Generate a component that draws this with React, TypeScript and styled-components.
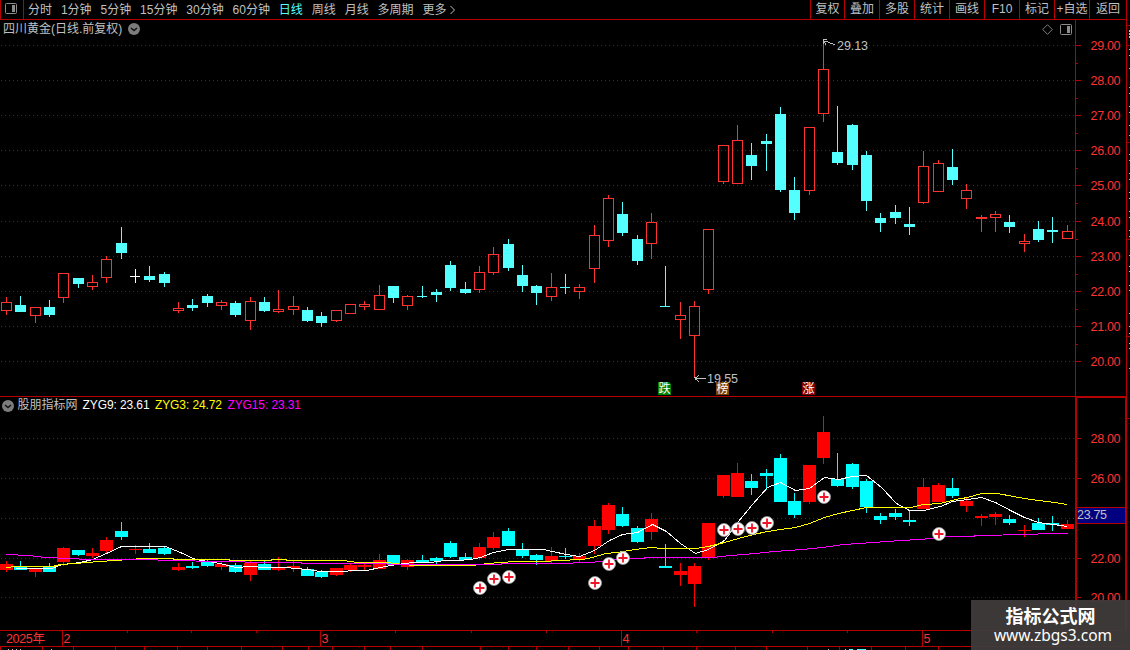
import React from 'react';
import { styled, createGlobalStyle } from 'styled-components';

type Kind = 'up' | 'down' | 'flat';
// [x, kind, price high/top/bottom/low, indicator high/top/bottom/low]
type Candle = [number, Kind, number, number, number, number, number, number, number, number];

const candles: Candle[] = [
  [6, 'up', 297, 302, 311, 315, 561, 564, 570, 572],
  [20, 'down', 296, 305, 312, 312, 561, 566, 570, 570],
  [35, 'up', 307, 307, 316, 323, 568, 568, 572, 577],
  [49, 'down', 300, 307, 315, 317, 563, 566, 572, 572],
  [63, 'up', 273, 273, 298, 303, 547, 548, 562, 566],
  [78, 'down', 278, 278, 284, 288, 550, 550, 555, 556],
  [92, 'up', 275, 282, 287, 290, 548, 553, 556, 558],
  [106, 'up', 256, 259, 278, 283, 537, 540, 551, 554],
  [121, 'down', 227, 243, 253, 259, 522, 531, 537, 540],
  [135, 'flat', 269, 276, 277, 283, 545, 549, 550, 554],
  [149, 'down', 266, 276, 280, 282, 543, 549, 553, 553],
  [164, 'down', 272, 274, 283, 287, 547, 548, 554, 555],
  [178, 'up', 302, 308, 311, 313, 563, 567, 570, 571],
  [192, 'down', 299, 305, 308, 311, 562, 566, 568, 569],
  [207, 'down', 294, 296, 303, 307, 560, 561, 566, 567],
  [221, 'up', 300, 302, 306, 310, 562, 564, 567, 570],
  [235, 'down', 301, 303, 315, 317, 563, 565, 572, 573],
  [250, 'up', 297, 301, 321, 330, 561, 563, 575, 581],
  [264, 'down', 297, 302, 311, 312, 561, 564, 570, 570],
  [278, 'up', 290, 309, 312, 313, 557, 568, 570, 571],
  [293, 'up', 296, 306, 310, 315, 561, 566, 568, 572],
  [307, 'down', 307, 310, 321, 322, 567, 569, 576, 576],
  [321, 'down', 312, 316, 323, 327, 570, 572, 577, 578],
  [336, 'up', 310, 310, 321, 322, 568, 568, 575, 576],
  [350, 'up', 304, 304, 314, 314, 564, 565, 570, 572],
  [364, 'up', 301, 304, 307, 310, 564, 565, 567, 570],
  [379, 'up', 285, 295, 310, 310, 554, 560, 569, 569],
  [393, 'down', 286, 286, 298, 303, 555, 555, 564, 564],
  [407, 'up', 295, 296, 306, 310, 559, 560, 567, 570],
  [422, 'down', 286, 296, 297, 298, 555, 560, 562, 562],
  [436, 'down', 289, 292, 295, 302, 557, 558, 561, 564],
  [450, 'down', 261, 265, 288, 291, 541, 543, 557, 558],
  [465, 'down', 282, 289, 293, 294, 553, 557, 560, 560],
  [479, 'up', 266, 272, 290, 293, 543, 547, 558, 560],
  [493, 'up', 247, 254, 273, 275, 532, 537, 548, 550],
  [508, 'down', 239, 244, 268, 271, 528, 531, 546, 546],
  [522, 'down', 265, 275, 286, 292, 543, 550, 556, 558],
  [536, 'down', 285, 286, 293, 305, 554, 555, 560, 565],
  [551, 'up', 273, 287, 297, 301, 547, 556, 561, 563],
  [565, 'down', 274, 287, 288, 294, 548, 556, 557, 559],
  [579, 'up', 284, 287, 292, 299, 553, 556, 559, 562],
  [594, 'up', 225, 235, 269, 283, 520, 526, 546, 554],
  [608, 'up', 195, 198, 241, 247, 503, 505, 530, 534],
  [622, 'down', 202, 214, 233, 236, 507, 514, 526, 527],
  [637, 'down', 235, 239, 261, 265, 526, 528, 542, 543],
  [651, 'up', 213, 222, 244, 259, 513, 519, 532, 540],
  [665, 'down', 266, 306, 307, 307, 544, 566, 568, 568],
  [680, 'up', 302, 315, 320, 339, 563, 571, 575, 586],
  [694, 'up', 301, 306, 336, 377, 563, 566, 584, 607],
  [708, 'up', 229, 229, 290, 294, 523, 523, 558, 560],
  [723, 'up', 145, 145, 182, 184, 475, 475, 496, 498],
  [737, 'up', 125, 140, 184, 184, 463, 473, 497, 497],
  [751, 'down', 143, 155, 166, 180, 474, 481, 488, 495],
  [766, 'down', 134, 141, 144, 171, 469, 473, 476, 490],
  [780, 'down', 107, 114, 190, 192, 454, 458, 502, 502],
  [794, 'down', 177, 190, 213, 220, 493, 501, 515, 518],
  [809, 'up', 127, 127, 191, 195, 465, 465, 502, 504],
  [823, 'up', 44, 69, 114, 122, 416, 432, 458, 464],
  [837, 'down', 106, 152, 163, 165, 453, 479, 486, 487],
  [852, 'down', 124, 125, 165, 170, 463, 464, 487, 489],
  [866, 'down', 151, 155, 201, 211, 479, 481, 507, 513],
  [880, 'down', 213, 218, 223, 232, 513, 516, 520, 524],
  [895, 'down', 205, 212, 218, 224, 509, 513, 517, 520],
  [909, 'down', 207, 224, 227, 235, 510, 520, 522, 526],
  [923, 'up', 151, 166, 203, 204, 478, 487, 509, 509],
  [938, 'up', 160, 163, 192, 192, 483, 485, 502, 502],
  [952, 'down', 149, 167, 180, 185, 478, 488, 496, 498],
  [966, 'up', 184, 190, 199, 209, 498, 501, 506, 512],
  [981, 'up', 215, 217, 219, 232, 514, 516, 518, 526],
  [995, 'up', 211, 214, 218, 232, 512, 514, 517, 525],
  [1009, 'down', 215, 222, 227, 233, 515, 519, 523, 525],
  [1024, 'up', 234, 241, 244, 252, 525, 530, 531, 537],
  [1038, 'down', 221, 229, 240, 242, 518, 523, 530, 530],
  [1052, 'down', 217, 230, 232, 243, 516, 523, 525, 531],
  [1067, 'up', 225, 231, 239, 239, 520, 524, 529, 529],
];

const fastLine =
  '15,568 51,568 62,564 80,562 92,559 106,553 121,546 165,546 180,552 195,559 207,561 220,563 235,567 250,566 265,567 285,567 307,569 320,571 342,571 353,570 366,570 380,567 396,564 413,562 430,562 444,560 458,560 470,559 480,557 493,552 508,549 543,549 552,551 566,554 579,556 594,550 609,540 622,534 637,532 652,524 666,531 680,543 695,553 708,549 724,540 738,521 752,504 767,487 780,482 795,490 809,488 824,477 838,479 852,476 866,475 881,487 896,503 909,510 923,510 940,506 952,501 967,499 981,497 995,502 1010,510 1024,517 1038,522 1053,524 1067,526';
const midLine =
  '6,567 15,566 52,566 60,564 75,563 86,562 100,561 114,560 143,558 172,558 174,559 228,559 230,560 270,560 272,559 285,559 287,560 343,560 357,562 386,562 402,564 415,565 472,565 487,563 500,562 515,561 543,561 558,560 582,559 592,557 605,553 617,552 628,550 642,548 652,547 660,548 695,548 708,546 724,542 738,538 753,534 767,531 780,529 795,527 809,523 824,517 838,513 852,510 866,507 910,507 923,504 940,503 955,499 967,497 981,493 997,493 1013,496 1030,499 1047,501 1067,504';
const slowLine =
  '6,554 28,555 45,557 70,558 86,559 157,559 158,560 230,561 258,562 300,562 302,563 370,563 402,564 500,564 502,563 558,563 587,562 602,561 615,559 643,558 645,557 712,557 730,555 755,553 773,551 802,549 822,547 843,544 873,542 900,540 920,539 930,538 947,536 973,536 975,535 1030,534 1045,533 1067,533';

const signals: [number, number][] = [
  [480, 588], [494, 579], [509, 577], [595, 583], [609, 564], [623, 558],
  [724, 530], [738, 529], [752, 528], [767, 523], [824, 497], [939, 534],
];

const priceLevels: [string, number][] = [
  ['29.00', 45], ['28.00', 80], ['27.00', 115], ['26.00', 150], ['25.00', 185],
  ['24.00', 221], ['23.00', 256], ['22.00', 291], ['21.00', 326], ['20.00', 361],
];
// the 24.00 level has no label, the last price box sits there
const indicatorLevels: [string, number][] = [
  ['28.00', 438], ['26.00', 478], ['', 518], ['22.00', 558], ['20.00', 597],
];

const badges = [
  { x: 658, text: '跌', color: '#008000' },
  { x: 716, text: '榜', color: '#804000' },
  { x: 802, text: '涨', color: '#800000' },
];

const periods = ['分时', '1分钟', '5分钟', '15分钟', '30分钟', '60分钟', '日线', '周线', '月线', '多周期'];
const tools: [string, number][] = [
  ['复权', 34], ['叠加', 35], ['多股', 35], ['统计', 35], ['画线', 35],
  ['F10', 35], ['标记', 35], ['+自选', 35], ['返回', 37],
];

const months: [string, number][] = [['2', 62], ['3', 320], ['4', 621], ['5', 922]];
const weekTicks = [127, 191, 256, 395, 471, 546, 696, 772, 847];
const footerTicks = [
  0, 42, 73, 115, 144, 177, 207, 241, 282, 308, 332, 364, 390, 422, 480, 508,
  536, 568, 599, 628, 663, 696, 735, 766, 807, 839, 871, 905, 938,
];
const edgeDots = [
  49, 55, 68, 87, 93, 106, 112, 125, 135, 154, 160, 173, 179, 192, 198, 211, 217, 230,
  236, 255, 266, 271, 285, 290, 313, 326, 333, 343, 348, 368,
];

const LINE = '#b40000';
const RED = '#ff3232';

const GlobalStyle = createGlobalStyle`
  body {
    margin: 0;
    background: #000;
    overflow: hidden;
  }
`;

const Screen = styled.div`
  position: relative;
  display: flex;
  flex-direction: column;
  width: 1130px;
  height: 650px;
  overflow: hidden;
  background: #000;
  color: #c0c0c0;
  font-family: 'Liberation Sans', 'Noto Sans CJK SC', sans-serif;
  font-size: 12px;
  line-height: 18px;

  svg {
    display: block;
    flex: none;
  }
`;

const Toolbar = styled.div`
  display: flex;
  box-sizing: border-box;
  height: 20px;
  width: 1127px;
  border-left: 1px solid ${LINE};
  border-right: 1px solid ${LINE};
  border-bottom: 1px solid ${LINE};
`;

const LayoutButton = styled.div`
  display: flex;
  align-items: center;
  box-sizing: border-box;
  width: 23px;
  padding: 0 0 2px 4px;
  border-right: 1px solid ${LINE};
`;

const Periods = styled.div`
  display: flex;
  flex: 1;
  gap: 8.9px;
  padding-left: 4px;
`;

const Period = styled.span<{ $active?: boolean }>`
  display: flex;
  align-items: center;
  gap: 3px;
  white-space: nowrap;
  color: ${props => (props.$active ? '#54ffff' : '#c0c0c0')};
`;

const Tool = styled.span<{ $width: number }>`
  box-sizing: border-box;
  width: ${props => props.$width}px;
  border-left: 1px solid ${LINE};
  line-height: 19px;
  text-align: center;
  white-space: nowrap;
`;

const Panel = styled.div<{ $height: number }>`
  display: flex;
  height: ${props => props.$height}px;
`;

const Plot = styled.div`
  display: flex;
  flex-direction: column;
  width: 1075px;
`;

const PlotHeader = styled.div<{ $height: number }>`
  display: flex;
  align-items: center;
  box-sizing: border-box;
  height: ${props => props.$height}px;
  padding: 0 3px 0 2px;
`;

const Title = styled.span`
  padding-left: 1px;
  margin-right: 6px;
  line-height: 20px;
  white-space: nowrap;
`;

const IndicatorName = styled.span`
  margin: 0 5px 0 3.5px;
  line-height: 17px;
  white-space: nowrap;
`;

const HeaderIcons = styled.div`
  display: flex;
  align-items: center;
  gap: 7px;
  margin-left: auto;
`;

const Value = styled.span<{ $color: string }>`
  margin-right: 5.5px;
  line-height: 16px;
  padding-bottom: 1px;
  letter-spacing: -0.1px;
  white-space: pre;
  color: ${props => props.$color};
`;

const Watermark = styled.div`
  position: absolute;
  right: 0;
  bottom: 0;
  display: flex;
  flex-direction: column;
  align-items: center;
  box-sizing: border-box;
  width: 159px;
  height: 50px;
  padding-top: 5px;
  background: rgba(64, 59, 59, 0.95);
  color: #fff;
`;

const SiteName = styled.div`
  font: 700 18px/20px 'Noto Sans CJK SC', sans-serif;
`;

const SiteUrl = styled.div`
  padding-left: 5px;
  font: 400 15.5px/20px 'Noto Sans', sans-serif;
`;

const ChevronIcon = () => (
  <svg width="12" height="12" viewBox="0 0 12 12">
    <circle cx="6" cy="6" r="6" fill="#7c7c7c" />
    <path d="M3 5l3 2.5L9 5" fill="none" stroke="#111" strokeWidth="1.5" />
  </svg>
);

const LayoutIcon = () => (
  <svg width="12" height="11" viewBox="0 0 12 11">
    <rect x="0.5" y="0.5" width="11" height="10" rx="1" fill="none" stroke="#8c8c8c" />
    <rect x="7" y="2" width="3" height="7" fill="#8c8c8c" />
  </svg>
);

const GridLines: React.FC<{ levels: [string, number][] }> = ({ levels }) => (
  <g stroke="#a00000" strokeDasharray="1 3" shapeRendering="crispEdges">
    {levels.map(([, y]) => (
      <line key={y} x1="1" x2="1074" y1={y + 0.5} y2={y + 0.5} />
    ))}
  </g>
);

const PriceCandle: React.FC<{ candle: Candle }> = ({ candle }) => {
  const [x, kind, high, top, bottom, low] = candle;
  const color = kind === 'up' ? RED : kind === 'down' ? '#54ffff' : '#ffffff';
  return (
    <g fill={color}>
      <rect x={x} y={high} width="1" height={top - high} />
      <rect x={x} y={bottom} width="1" height={low - bottom} />
      {kind === 'up' ? (
        <rect x={x - 4.5} y={top + 0.5} width="10" height={bottom - top - 1} fill="none" stroke={color} />
      ) : (
        <rect x={x - 5} y={top} width={bottom - top > 1 ? 11 : 10} height={bottom - top} />
      )}
    </g>
  );
};

const SolidCandle: React.FC<{ candle: Candle }> = ({ candle }) => {
  const [x, kind, , , , , high, top, bottom, low] = candle;
  return (
    <g fill={kind === 'down' ? '#00ffff' : '#ff0000'}>
      <rect x={x} y={high} width="1" height={low - high} />
      <rect x={x - 6} y={top} width="13" height={bottom - top} />
    </g>
  );
};

const AxisLabels: React.FC<{ levels: [string, number][] }> = ({ levels }) => (
  <g fill={RED}>
    {levels
      .filter(([label]) => label)
      .map(([label, y]) => (
        <text key={label} x="1090.5" y={y + 5} fontSize="12.5" textLength="30">
          {label}
        </text>
      ))}
  </g>
);

const PriceAxis = () => (
  <svg width="55" height="377" viewBox="1075 20 55 377">
    <g fill={LINE}>
      <rect x="1075" y="20" width="1" height="377" />
      <rect x="1126" y="20" width="1" height="377" />
      <rect x="1075" y="396" width="52" height="1" />
      {priceLevels.map(([label, y]) => (
        <g key={label}>
          <rect x="1076" y={y} width="5" height="1" />
          {y < 361 && <rect x="1076" y={y + 18} width="2" height="1" />}
        </g>
      ))}
      {[25, 45, 142, 239, 336].map(y => (
        <rect key={y} x="1127" y={y} width="3" height="1" />
      ))}
    </g>
    <g fill="#c0c0c0">
      {[30, 33, 36].map(y => (
        <rect key={y} x="1129" y={y} width="1" height="2" />
      ))}
      {edgeDots.map(y => (
        <rect key={y} x="1129" y={y} width="1" height="1" />
      ))}
    </g>
    <AxisLabels levels={priceLevels} />
  </svg>
);

const IndicatorAxis = () => (
  <svg width="55" height="233" viewBox="1075 397 55 233">
    <g fill={LINE}>
      <rect x="1075" y="397" width="52" height="1" />
      <rect x="1075" y="397" width="2" height="233" />
      <rect x="1125" y="397" width="2" height="233" />
      <rect x="1127" y="418" width="3" height="1" />
      {indicatorLevels.map(([, y]) => (
        <g key={y}>
          <rect x="1077" y={y} width="4" height="1" />
          {y < 597 && <rect x="1077" y={y + 20} width="1" height="1" />}
        </g>
      ))}
    </g>
    <AxisLabels levels={indicatorLevels} />
    <rect x="1077" y="507" width="48" height="17" fill={LINE} />
    <rect x="1077" y="508" width="48" height="15" fill="#000080" />
    <text x="1077" y="519" fontSize="12.5" textLength="30" fill="#c0c0c0">
      23.75
    </text>
  </svg>
);

const TimeAxis = () => (
  <svg width="1130" height="20" viewBox="0 630 1130 20">
    <g fill={LINE}>
      <rect x="0" y="630" width="1127" height="1" />
      <rect x="0" y="646" width="1127" height="1" />
      {months.map(([label, x]) => (
        <rect key={label} x={x} y="630" width="1" height="16" />
      ))}
      {weekTicks.map(x => (
        <rect key={x} x={x} y="631" width="1" height="2" />
      ))}
      {footerTicks.map(x => (
        <rect key={x} x={x} y="647" width="1" height="3" />
      ))}
    </g>
    <g fill={RED} fontSize="12.5">
      <text x="6" y="643" textLength="39">2025年</text>
      {months.map(([label, x]) => (
        <text key={label} x={x + 1.5} y="643">
          {label}
        </text>
      ))}
    </g>
    <g fill="#c0c0c0">
      {[8, 12, 16, 20, 51, 828, 845].map(x => (
        <rect key={x} x={x} y="649" width="1" height="1" />
      ))}
      <rect x="849" y="649" width="4" height="1" fill="#54ffff" />
      <rect x="857" y="649" width="9" height="1" fill="#54ffff" />
    </g>
  </svg>
);

const App: React.FC = () => {
  return (
    <Screen>
      <GlobalStyle />
      <Toolbar>
        <LayoutButton>
          <LayoutIcon />
        </LayoutButton>
        <Periods>
          {periods.map(name => (
            <Period key={name} $active={name === '日线'}>
              {name}
            </Period>
          ))}
          <Period>
            更多
            <svg width="7" height="10" viewBox="0 0 7 10">
              <path d="M1.5 1l4 4-4 4" fill="none" stroke="#c0c0c0" />
            </svg>
          </Period>
        </Periods>
        {tools.map(([name, width]) => (
          <Tool key={name} $width={width}>
            {name}
          </Tool>
        ))}
      </Toolbar>

      <Panel $height={377}>
        <Plot>
          <PlotHeader $height={18}>
            <Title>四川黄金(日线.前复权)</Title>
            <ChevronIcon />
            <HeaderIcons>
              <svg width="11" height="11" viewBox="0 0 11 11">
                <path d="M5.5 0.7l4.8 4.8-4.8 4.8L.7 5.5z" fill="none" stroke="#7c7c7c" />
              </svg>
              <LayoutIcon />
            </HeaderIcons>
          </PlotHeader>
          <svg width="1075" height="359" viewBox="0 38 1075 359">
            <GridLines levels={priceLevels} />
            {candles.map(candle => (
              <PriceCandle key={candle[0]} candle={candle} />
            ))}
            <g fill="none" stroke="#c0c0c0" shapeRendering="crispEdges">
              <path d="M823.5 44v-5M824 39.5h3M824 41.5l4 .5 7 3M824 42l2 2.500" />
              <path d="M695 378.500h11M695 378.500l4-3M695 378.500l4 3M694 377.500h2" />
            </g>
            <g fill="#c0c0c0" fontSize="12.5">
              <text x="837" y="50" textLength="31">29.13</text>
              <text x="707" y="383" textLength="31">19.55</text>
            </g>
            {badges.map(({ x, text, color }) => (
              <g key={x}>
                <path d={`M${x} 382h11l2 2v11h-13z`} fill={color} />
                <text x={x + 0.5} y="393" fontSize="12" fill="#fff">
                  {text}
                </text>
              </g>
            ))}
            <rect x="0" y="396" width="1075" height="1" fill={LINE} />
          </svg>
        </Plot>
        <PriceAxis />
      </Panel>

      <Panel $height={233}>
        <Plot>
          <PlotHeader $height={17}>
            <ChevronIcon />
            <IndicatorName>股朋指标网</IndicatorName>
            <Value $color="#ffffff">ZYG9: 23.61</Value>
            <Value $color="#ffff00">ZYG3: 24.72</Value>
            <Value $color="#ff00ff">ZYG15: 23.31</Value>
          </PlotHeader>
          <svg width="1075" height="216" viewBox="0 414 1075 216">
            <GridLines levels={indicatorLevels} />
            {candles.map(candle => (
              <SolidCandle key={candle[0]} candle={candle} />
            ))}
            <g fill="none" shapeRendering="crispEdges" transform="translate(0.5 0.5)">
              <polyline points={fastLine} stroke="#ffffff" />
              <polyline points={midLine} stroke="#ffff00" />
              <polyline points={slowLine} stroke="#ff00ff" />
            </g>
            {signals.map(([x, y]) => (
              <g key={x} transform={`translate(${x} ${y})`}>
                <circle r="6.5" fill="#fff" stroke="#999" strokeWidth="0.8" />
                <path d="M-4.500 0h9M0-4.500v9" stroke="#f01428" strokeWidth="1.8" />
              </g>
            ))}
          </svg>
        </Plot>
        <IndicatorAxis />
      </Panel>

      <TimeAxis />

      <Watermark>
        <SiteName>指标公式网</SiteName>
        <SiteUrl>www.zbgs3.com</SiteUrl>
      </Watermark>
    </Screen>
  );
};

export default App;
